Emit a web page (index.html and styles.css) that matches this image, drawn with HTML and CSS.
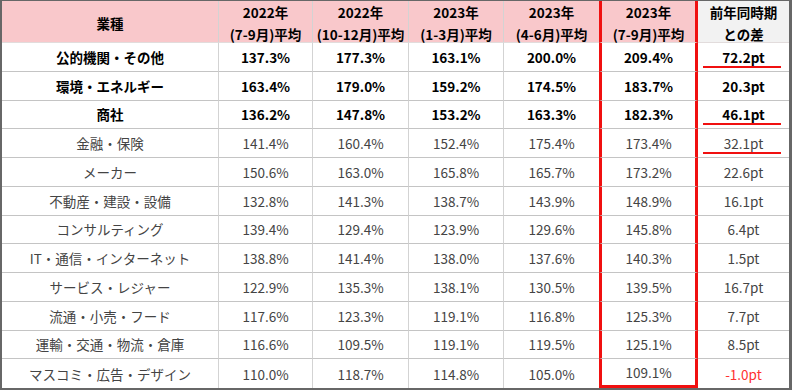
FILE: index.html
```html
<!DOCTYPE html>
<html lang="ja">
<head>
<meta charset="utf-8">
<link rel="stylesheet" href="styles.css">
</head>
<body>
<div class="frame">
  <div class="grid">
    <div class="c h">業種</div>
    <div class="c h">2022年<br>(7-9月)平均</div>
    <div class="c h">2022年<br>(10-12月)平均</div>
    <div class="c h">2023年<br>(1-3月)平均</div>
    <div class="c h c5">2023年<br>(4-6月)平均</div>
    <div class="c h c6">2023年<br>(7-9月)平均</div>
    <div class="c h c7 hg">前年同時期<br>との差</div>

    <div class="c b">公的機関・その他</div><div class="c b">137.3%</div><div class="c b">177.3%</div><div class="c b">163.1%</div><div class="c b c5">200.0%</div><div class="c b c6">209.4%</div><div class="c b c7 ul">72.2pt</div>
    <div class="c b">環境・エネルギー</div><div class="c b">163.4%</div><div class="c b">179.0%</div><div class="c b">159.2%</div><div class="c b c5">174.5%</div><div class="c b c6">183.7%</div><div class="c b c7">20.3pt</div>
    <div class="c b">商社</div><div class="c b">136.2%</div><div class="c b">147.8%</div><div class="c b">153.2%</div><div class="c b c5">163.3%</div><div class="c b c6">182.3%</div><div class="c b c7 ul">46.1pt</div>
    <div class="c">金融・保険</div><div class="c">141.4%</div><div class="c">160.4%</div><div class="c">152.4%</div><div class="c c5">175.4%</div><div class="c c6">173.4%</div><div class="c c7 ul">32.1pt</div>
    <div class="c">メーカー</div><div class="c">150.6%</div><div class="c">163.0%</div><div class="c">165.8%</div><div class="c c5">165.7%</div><div class="c c6">173.2%</div><div class="c c7">22.6pt</div>
    <div class="c">不動産・建設・設備</div><div class="c">132.8%</div><div class="c">141.3%</div><div class="c">138.7%</div><div class="c c5">143.9%</div><div class="c c6">148.9%</div><div class="c c7">16.1pt</div>
    <div class="c">コンサルティング</div><div class="c">139.4%</div><div class="c">129.4%</div><div class="c">123.9%</div><div class="c c5">129.6%</div><div class="c c6">145.8%</div><div class="c c7">6.4pt</div>
    <div class="c">IT・通信・インターネット</div><div class="c">138.8%</div><div class="c">141.4%</div><div class="c">138.0%</div><div class="c c5">137.6%</div><div class="c c6">140.3%</div><div class="c c7">1.5pt</div>
    <div class="c">サービス・レジャー</div><div class="c">122.9%</div><div class="c">135.3%</div><div class="c">138.1%</div><div class="c c5">130.5%</div><div class="c c6">139.5%</div><div class="c c7">16.7pt</div>
    <div class="c">流通・小売・フード</div><div class="c">117.6%</div><div class="c">123.3%</div><div class="c">119.1%</div><div class="c c5">116.8%</div><div class="c c6">125.3%</div><div class="c c7">7.7pt</div>
    <div class="c">運輸・交通・物流・倉庫</div><div class="c">116.6%</div><div class="c">109.5%</div><div class="c">119.1%</div><div class="c c5">119.5%</div><div class="c c6">125.1%</div><div class="c c7">8.5pt</div>
    <div class="c last">マスコミ・広告・デザイン</div><div class="c last">110.0%</div><div class="c last">118.7%</div><div class="c last">114.8%</div><div class="c last c5">105.0%</div><div class="c last c6">109.1%</div><div class="c last c7 neg">-1.0pt</div>
  </div>
</div>
</body>
</html>
```
FILE: styles.css
```css
html, body {
  margin: 0;
  padding: 0;
  background: #ffffff;
}
.frame {
  width: 792px;
  height: 390px;
  box-sizing: border-box;
  border-style: solid;
  border-color: #676767;
  border-width: 1px 3px 2px 2px;
  background: #fff;
  font-family: "Noto Sans CJK JP", "Noto Sans", sans-serif;
  font-size: 13.5px;
  color: #444;
}
.grid {
  display: grid;
  grid-template-columns: 217px 94px 96px 95px 95px 99px 91px;
  grid-template-rows: 42px repeat(12, 28.75px);
}
.c {
  box-sizing: border-box;
  display: flex;
  align-items: center;
  justify-content: center;
  text-align: center;
  border-right: 1px solid #d3d3d3;
  border-bottom: 1px solid #c4c4c4;
  position: relative;
  line-height: 20px;
  white-space: nowrap;
}
.c.h {
  background: #f9c8cb;
  color: #000;
  font-weight: 700;
  border-bottom: 1px solid #e2dcdc;
  line-height: 22px;
  padding-top: 2px;
}
.c.hg {
  background: #f2f2f2;
}
.c.b {
  color: #000;
  font-weight: 700;
}
.c5 {
  border-right: none;
}
.c6 {
  border-left: 3px solid #f01010;
  border-right: 3px solid #f01010;
}
.c7 {
  border-right: none;
}
.c.last {
  border-bottom: none;
}
.c.last.c6 {
  border-bottom: 3px solid #f01010;
}
.neg {
  color: #ff3030;
}
.ul::after {
  content: "";
  position: absolute;
  left: 5px;
  right: 8px;
  bottom: 3px;
  height: 2px;
  background: #f01010;
}
```
